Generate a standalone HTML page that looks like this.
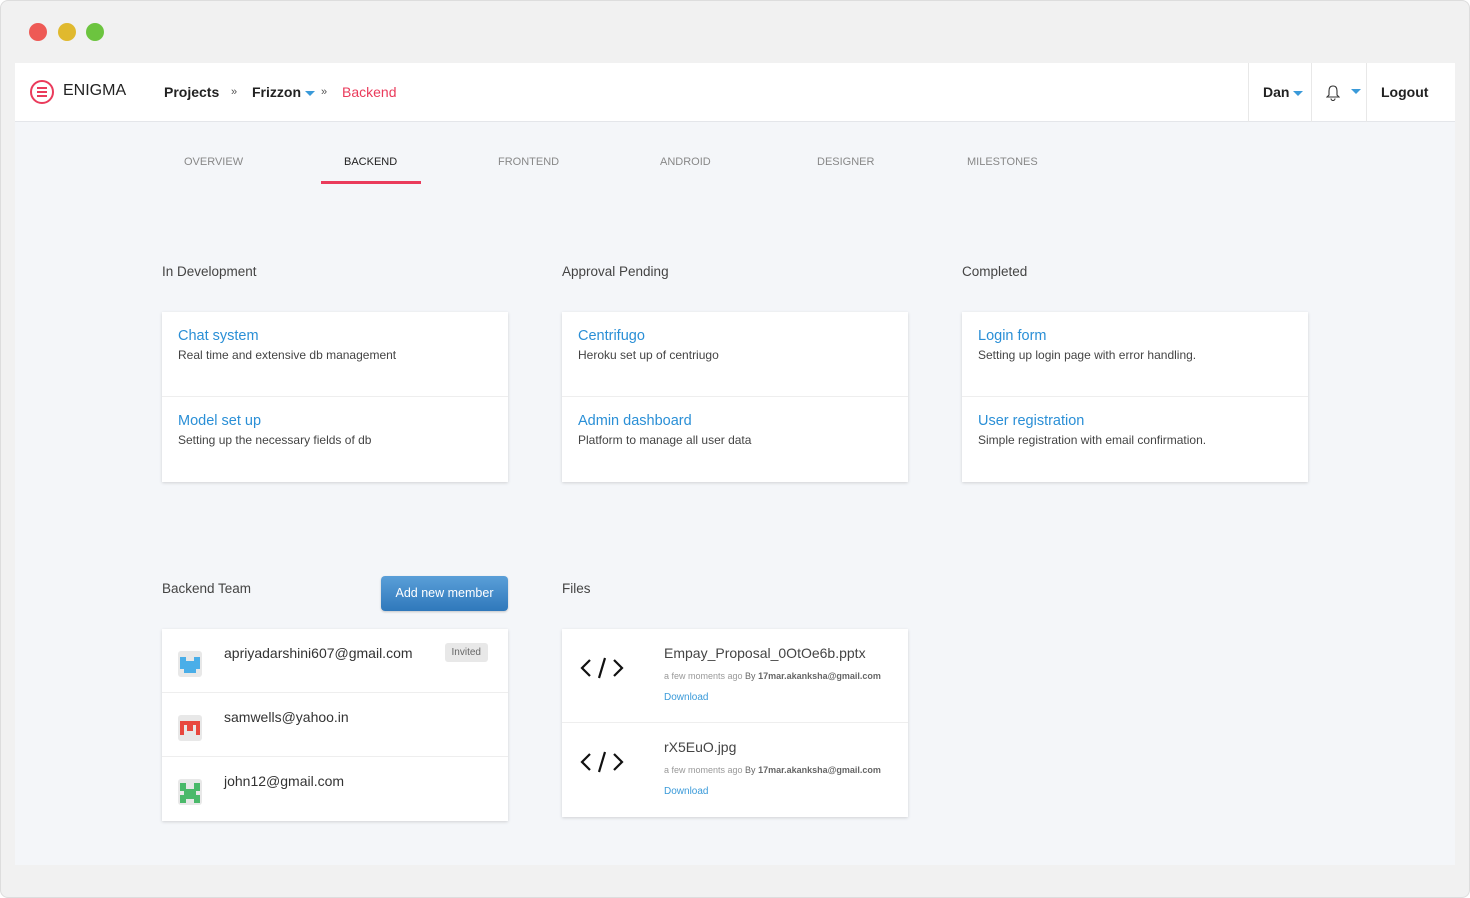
<!DOCTYPE html>
<html><head><style>
*{box-sizing:border-box;margin:0;padding:0}
body{width:1470px;height:898px;background:#fff;font-family:"Liberation Sans",sans-serif;position:relative;overflow:hidden}
.win{position:absolute;left:0;top:0;width:1470px;height:898px;background:#f1f1f1;border:1px solid #ddd;border-radius:8px}
.dot{position:absolute;top:22px;width:18px;height:18px;border-radius:50%}
.main{position:absolute;left:14px;top:62px;width:1440px;height:802px;background:#f4f6f9}
.hdr{position:absolute;left:0;top:0;width:1440px;height:59px;background:#fff;border-bottom:1px solid #e4e6ea}
.a{position:absolute;white-space:nowrap}
.nav{font-size:14px;font-weight:bold;color:#222;top:21px}
.tab{font-size:11px;color:#888;top:93px}
.sec{font-size:13.5px;color:#444}
.card{position:absolute;background:#fff;box-shadow:0 1px 3px rgba(0,0,0,.15)}
.row{height:85px;border-bottom:1px solid #eee;padding:16px 16px}
.row:last-child{border-bottom:0}
.t{color:#2a8fd6;font-size:14.5px}
.d{color:#444;font-size:12px;margin-top:4px}
.caret{display:inline-block;border-left:5px solid transparent;border-right:5px solid transparent;border-top:5px solid #3a9ad9;vertical-align:middle}
.mrow{height:64px;border-bottom:1px solid #eee;position:relative}
.mrow:last-child{border-bottom:0}
.av{position:absolute;left:16px;top:22px;width:24px;height:26px;background:#e8e8e8;border-radius:3px}
.em{position:absolute;left:62px;top:16px;font-size:14px;color:#333}
.frow{height:94px;border-bottom:1px solid #eee;position:relative}
.frow:last-child{border-bottom:0}
</style></head><body>
<div class="win">
<div class="dot" style="left:28px;background:#ee5a55"></div>
<div class="dot" style="left:57px;background:#e0b92e"></div>
<div class="dot" style="left:85px;background:#6cc43f"></div>
<div class="main">
<div class="hdr">
<svg class="a" style="left:14px;top:16px" width="26" height="26" viewBox="0 0 26 26"><circle cx="13" cy="13" r="11" fill="none" stroke="#ea3b5b" stroke-width="2"/><path d="M8 9h10M8 13h10M8 17h10" stroke="#ea3b5b" stroke-width="2"/></svg>
<div class="a" style="left:48px;top:19px;font-size:16px;color:#222">ENIGMA</div>
<div class="a nav" style="left:149px">Projects</div>
<div class="a" style="left:216px;top:23px;font-size:11px;color:#555">»</div>
<div class="a nav" style="left:237px">Frizzon <span class="caret"></span></div>
<div class="a" style="left:306px;top:23px;font-size:11px;color:#555">»</div>
<div class="a nav" style="left:327px;color:#ea3b5b;font-weight:normal">Backend</div>
<div class="a" style="left:1233px;top:0;width:1px;height:59px;background:#e8e8e8"></div>
<div class="a nav" style="left:1248px">Dan <span class="caret"></span></div>
<div class="a" style="left:1296px;top:0;width:1px;height:59px;background:#e8e8e8"></div>
<svg class="a" style="left:1311px;top:21px" width="14" height="17" viewBox="0 0 14 17"><path d="M7 2c-3 0-4 2-4 5v4l-2 2h12l-2-2V7c0-3-1-5-4-5zM5 14.5a2 2 0 004 0" fill="none" stroke="#333" stroke-width="1.1"/></svg>
<div class="a" style="left:1336px;top:20px"><span class="caret"></span></div>
<div class="a" style="left:1351px;top:0;width:1px;height:59px;background:#e8e8e8"></div>
<div class="a nav" style="left:1366px">Logout</div>
</div>
<div class="a tab" style="left:169px">OVERVIEW</div>
<div class="a tab" style="left:329px;color:#222">BACKEND</div>
<div class="a" style="left:306px;top:118px;width:100px;height:3px;background:#ea3b5b"></div>
<div class="a tab" style="left:483px">FRONTEND</div>
<div class="a tab" style="left:645px">ANDROID</div>
<div class="a tab" style="left:802px">DESIGNER</div>
<div class="a tab" style="left:952px">MILESTONES</div>

<div class="a sec" style="left:147px;top:201px">In Development</div>
<div class="a sec" style="left:547px;top:201px">Approval Pending</div>
<div class="a sec" style="left:947px;top:201px">Completed</div>

<div class="card" style="left:147px;top:249px;width:346px"><div class="row"><div class="t">Chat system</div><div class="d">Real time and extensive db management</div></div><div class="row"><div class="t">Model set up</div><div class="d">Setting up the necessary fields of db</div></div></div>
<div class="card" style="left:547px;top:249px;width:346px"><div class="row"><div class="t">Centrifugo</div><div class="d">Heroku set up of centriugo</div></div><div class="row"><div class="t">Admin dashboard</div><div class="d">Platform to manage all user data</div></div></div>
<div class="card" style="left:947px;top:249px;width:346px"><div class="row"><div class="t">Login form</div><div class="d">Setting up login page with error handling.</div></div><div class="row"><div class="t">User registration</div><div class="d">Simple registration with email confirmation.</div></div></div>

<div class="a sec" style="left:147px;top:518px">Backend Team</div>
<div class="a" style="left:366px;top:513px;width:127px;height:35px;border-radius:4px;background:linear-gradient(#5a9fd8,#2f78bb);color:#fff;font-size:12.5px;text-align:center;line-height:35px;box-shadow:0 1px 2px rgba(0,0,0,.2)">Add new member</div>
<div class="a sec" style="left:547px;top:518px">Files</div>

<div class="card" style="left:147px;top:566px;width:346px">
<div class="mrow"><div class="av"><svg width="24" height="26"><path d="M2 6h6v4h8V6h6v12h-4v4H6v-4H2z" fill="#4aaee8"/></svg></div><div class="em">apriyadarshini607@gmail.com</div><div class="a" style="right:20px;top:14px;background:#e8e8e8;border-radius:3px;font-size:10px;color:#666;padding:4px 7px">Invited</div></div>
<div class="mrow"><div class="av"><svg width="24" height="26"><path d="M2 6h20v14h-4V10h-3v6h-6v-6H6v10H2z" fill="#e8483f"/></svg></div><div class="em">samwells@yahoo.in</div></div>
<div class="mrow"><div class="av"><svg width="24" height="26"><path d="M2 4h6v6h8V4h6v8h-4v4h4v8h-6v-4H8v4H2v-8h4v-4H2z" fill="#4ab96a"/></svg></div><div class="em">john12@gmail.com</div></div>
</div>

<div class="card" style="left:547px;top:566px;width:346px">
<div class="frow"><svg class="a" style="left:18px;top:28px" width="44" height="22" viewBox="0 0 44 22"><path d="M10 3L2 11l8 8M34 3l8 8-8 8M25 1l-6 20" fill="none" stroke="#111" stroke-width="2.2"/></svg>
<div class="a" style="left:102px;top:16px;font-size:14px;color:#444">Empay_Proposal_0OtOe6b.pptx</div>
<div class="a" style="left:102px;top:42px;font-size:9px;color:#999">a few moments ago <span style="color:#666">By <b>17mar.akanksha@gmail.com</b></span></div>
<div class="a" style="left:102px;top:63px;font-size:10px;color:#3a9ad9">Download</div></div>
<div class="frow"><svg class="a" style="left:18px;top:28px" width="44" height="22" viewBox="0 0 44 22"><path d="M10 3L2 11l8 8M34 3l8 8-8 8M25 1l-6 20" fill="none" stroke="#111" stroke-width="2.2"/></svg>
<div class="a" style="left:102px;top:16px;font-size:14px;color:#444">rX5EuO.jpg</div>
<div class="a" style="left:102px;top:42px;font-size:9px;color:#999">a few moments ago <span style="color:#666">By <b>17mar.akanksha@gmail.com</b></span></div>
<div class="a" style="left:102px;top:63px;font-size:10px;color:#3a9ad9">Download</div></div>
</div>
</div>
</div>
</body></html>
